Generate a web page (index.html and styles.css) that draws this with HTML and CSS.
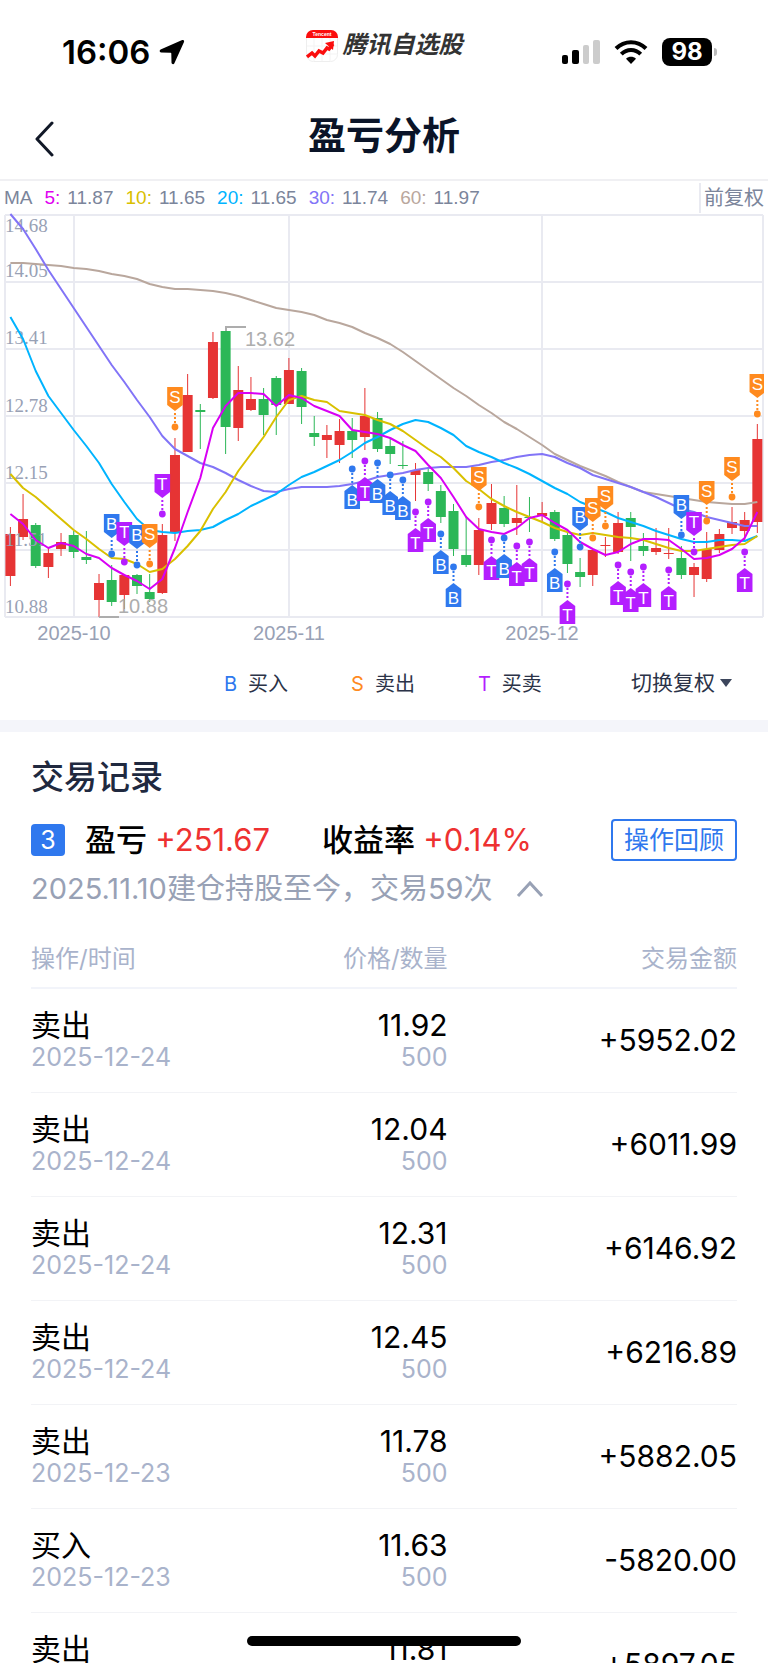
FILE: index.html
```html
<!DOCTYPE html>
<html lang="zh-CN">
<head>
    <meta charset="UTF-8">
    <meta name="viewport" content="width=device-width, initial-scale=1.0">
    <title>盈亏分析</title>
    <link rel="stylesheet" href="styles.css">
</head>
<body>
<div class="screen">
    <div class="status-bar">
        <div class="status-time">
            <span>16:06</span>
            <svg width="26" height="26" viewBox="0 0 26 26"><path d="M23.2 1.1 1.6 10.6C.2 11.2.4 13.4 2 13.5l9.6.3c.5 0 .7.2.7.7l.2 9.3c.1 1.6 2.3 2 2.9.5L25 3C25.6 1.600 24.500.600 23.200 1.100Z" fill="#000"/></svg>
        </div>
        <div class="app-brand">
            <svg width="32" height="32" viewBox="0 0 32 32">
                <rect x=".5" y=".5" width="31" height="31" rx="7" fill="#fff" stroke="#eee"/>
                <path d="M8 8v23M16 8v23M24 8v23M1 16h30M1 24h30" stroke="#f3f3f3"/>
                <path d="M0 8V7a7 7 0 0 1 7-7h18a7 7 0 0 1 7 7v1Z" fill="#fb0d0d"/>
                <text x="16" y="6" class="brand-tag">Tencent</text>
                <path d="M1 27l5-4 3 3 4-5 4 2 4-5 2 1 4-5" fill="none" stroke="#fb0d0d" stroke-width="3.500"/>
                <path d="M19 13l9-2-1 9Z" fill="#fb0d0d"/>
            </svg>
            <span>腾讯自选股</span>
        </div>
        <div class="status-icons">
            <svg width="38" height="26" viewBox="0 0 38 26">
                <rect x="0" y="16" width="6" height="9" rx="2"/>
                <rect x="10" y="11" width="7" height="14" rx="2"/>
                <rect x="21" y="6" width="6" height="19" rx="2" fill="#ccc"/>
                <rect x="31" y="1" width="7" height="24" rx="2" fill="#ccc"/>
            </svg>
            <svg width="34" height="26" viewBox="0 0 34 26" fill="none" stroke="#000" stroke-width="4">
                <path d="M2 9.500C10.500 1 23.500 1 32 9.500"/>
                <path d="M7.300 15.200c5.500-5.500 13.900-5.500 19.400 0"/>
                <path d="M17 25l-5-5.200c2.900-2.600 7.100-2.600 10 0Z" fill="#000" stroke="none"/>
            </svg>
            <span class="battery">98</span>
        </div>
    </div>

    <header class="nav-bar">
        <button class="back-btn" aria-label="返回">
            <svg width="20" height="36" viewBox="0 0 20 36"><path d="M17 2 2 18l15 16" fill="none" stroke="#111827" stroke-width="3" stroke-linecap="round" stroke-linejoin="round"/></svg>
        </button>
        <h1>盈亏分析</h1>
    </header>

    <div class="ma-bar">
        <span class="ma-title">MA</span>
        <span class="ma-item"><b class="ma5">5:</b>11.87</span>
        <span class="ma-item"><b class="ma10">10:</b>11.65</span>
        <span class="ma-item"><b class="ma20">20:</b>11.65</span>
        <span class="ma-item"><b class="ma30">30:</b>11.74</span>
        <span class="ma-item"><b class="ma60">60:</b>11.97</span>
        <span class="ma-mode">前复权</span>
    </div>

    <svg id="k-chart" class="k-chart" viewBox="0 8 768 440"></svg>

    <div class="legend">
        <span><b class="buy">B</b>买入</span>
        <span><b class="sell">S</b>卖出</span>
        <span><b class="both">T</b>买卖</span>
        <button class="switch-btn">切换复权<i class="caret"></i></button>
    </div>

    <section class="records">
        <h2>交易记录</h2>
        <div class="summary">
            <span class="round">3</span>
            <span class="metric">盈亏 <em>+251.67</em></span>
            <span class="metric">收益率 <em>+0.14%</em></span>
            <button class="review-btn">操作回顾</button>
        </div>
        <button class="period">
            2025.11.10建仓持股至今，交易59次
            <svg width="28" height="18" viewBox="0 0 28 18"><path d="M2 16 14 3l12 13" fill="none" stroke="#98a1b5" stroke-width="3"/></svg>
        </button>

        <table class="trades">
            <thead>
            <tr><th>操作/时间</th><th>价格/数量</th><th>交易金额</th></tr>
            </thead>
            <tbody>
            <tr><td>卖出<small>2025-12-24</small></td><td>11.92<small>500</small></td><td>+5952.02</td></tr>
            <tr><td>卖出<small>2025-12-24</small></td><td>12.04<small>500</small></td><td>+6011.99</td></tr>
            <tr><td>卖出<small>2025-12-24</small></td><td>12.31<small>500</small></td><td>+6146.92</td></tr>
            <tr><td>卖出<small>2025-12-24</small></td><td>12.45<small>500</small></td><td>+6216.89</td></tr>
            <tr><td>卖出<small>2025-12-23</small></td><td>11.78<small>500</small></td><td>+5882.05</td></tr>
            <tr><td>买入<small>2025-12-23</small></td><td>11.63<small>500</small></td><td>-5820.00</td></tr>
            <tr><td>卖出<small>2025-12-23</small></td><td>11.81<small>500</small></td><td>+5897.05</td></tr>
            </tbody>
        </table>
    </section>
    <div class="home-indicator"></div>
</div>
<script src="chart.js"></script>
</body>
</html>
```

FILE: styles.css
```css
* {
    box-sizing: border-box;
}

body {
    margin: 0;
    background: #fff;
    color: #000;
    font-family: Inter, "Noto Sans CJK SC", sans-serif;
}

button {
    background: none;
    border: none;
    padding: 0;
    font-family: inherit;
    cursor: pointer;
}

h1, h2 {
    margin: 0;
}

b, em, i {
    font-style: normal;
    font-weight: normal;
}

.screen {
    height: 100vh;
    overflow: hidden;
}

/* status bar */
.status-bar {
    display: grid;
    grid-template-columns: 1fr auto 1fr;
    align-items: start;
    padding: 30px 52px 0;
}

.status-time {
    display: flex;
    align-items: center;
    gap: 9px;
    height: 44px;
    padding-left: 10px;
    font-size: 33px;
    font-weight: 600;
}

.app-brand {
    display: flex;
    gap: 5px;
    height: 32px;
    font-size: 24px;
    font-weight: bold;
    font-style: italic;
    line-height: 30px;
    color: #333;
}

.brand-tag {
    font: bold 5px "Liberation Sans", sans-serif;
    fill: #fff;
    text-anchor: middle;
}

.status-icons {
    display: flex;
    justify-content: flex-end;
    align-items: center;
    gap: 14px;
    height: 44px;
}

.battery {
    position: relative;
    width: 50px;
    margin-right: 4px;
    border-radius: 8px;
    background: #000;
    color: #fff;
    font-size: 24px;
    font-weight: bold;
    line-height: 28px;
    text-align: center;
}

.battery::after {
    content: "";
    position: absolute;
    right: -5px;
    top: 10px;
    width: 3px;
    height: 8px;
    border-radius: 0 3px 3px 0;
    background: #bbb;
}

/* title */
.nav-bar {
    display: grid;
    grid-template-columns: 1fr auto 1fr;
    align-items: center;
    height: 107px;
    padding: 16px 35px 0;
    border-bottom: 2px solid #f0f0f3;
}

.back-btn {
    justify-self: start;
    height: 36px;
    margin-top: 8px;
}

.nav-bar h1 {
    font-size: 38px;
    font-weight: bold;
    line-height: 44px;
    color: #0a1428;
}

/* moving averages */
.ma-bar {
    display: flex;
    align-items: center;
    gap: 12px;
    height: 32px;
    padding: 2px 4px 0;
    font-family: "Liberation Sans", "Noto Sans CJK SC", sans-serif;
    font-size: 19px;
    color: #7b859b;
}

.ma-item b {
    margin-right: 7px;
}

.ma5 { color: #e000f0; }
.ma10 { color: #d9c000; }
.ma20 { color: #00b4ff; }
.ma30 { color: #8274f7; }
.ma60 { color: #b9a79d; }

.ma-mode {
    margin-left: auto;
    padding-left: 3px;
    border-left: 2px solid #e9eaf1;
    font-size: 20px;
    line-height: 30px;
}

/* chart */
.k-chart {
    display: block;
    width: 100%;
}

.grid {
    fill: none;
    stroke: #e9eaf1;
    stroke-width: 2;
}

.up { fill: #e63434; stroke: #e63434; }
.down { fill: #2cb757; stroke: #2cb757; }

.line {
    fill: none;
    stroke-width: 2;
    stroke-linejoin: round;
}

.price-label {
    font: 19px "Liberation Serif", serif;
    fill: #98a1b5;
}

.date-label {
    font: 20px "Liberation Sans", sans-serif;
    fill: #98a1b5;
    text-anchor: middle;
}

.peak-label {
    font: 20px "Liberation Sans", sans-serif;
    fill: #adadad;
}

.mark-text {
    font: 17px "Liberation Sans", sans-serif;
    fill: #fff;
    text-anchor: middle;
}

.legend {
    display: flex;
    align-items: center;
    gap: 63px;
    height: 67px;
    padding: 0 36px 8px 224px;
    font-size: 20px;
    color: #2b3348;
}

.legend b {
    margin-right: 11px;
}

.legend .buy { color: #2f78ee; }
.legend .sell { color: #ff8a1e; }
.legend .both { color: #b41eff; }

.switch-btn {
    display: flex;
    align-items: center;
    gap: 5px;
    margin-left: auto;
    font-size: 21px;
    line-height: 30px;
    color: #2b3348;
}

.caret {
    border: 6px solid transparent;
    border-top: 8px solid #3c465c;
    border-bottom: 0;
}

/* trade records */
.records {
    padding: 22px 31px 0;
    border-top: 12px solid #f4f5fa;
}

.records h2 {
    font-size: 33px;
    font-weight: 500;
    line-height: 46px;
    color: #20293f;
}

.summary {
    display: flex;
    align-items: center;
    margin-top: 19px;
    height: 42px;
    font-size: 31px;
    line-height: 38px;
}

.round {
    width: 34px;
    margin-right: 20px;
    border-radius: 4px;
    background: #2f78ee;
    color: #fff;
    font-size: 25px;
    line-height: 32px;
    text-align: center;
}

.metric {
    margin-right: 52px;
    font-weight: 500;
    white-space: nowrap;
}

.metric em {
    font-weight: 400;
    color: #ee3131;
}

.review-btn {
    margin-left: auto;
    padding: 0 11px;
    border: 2px solid #2f78ee;
    border-radius: 4px;
    color: #2f78ee;
    font-size: 25px;
    line-height: 38px;
    white-space: nowrap;
}

.period {
    display: flex;
    align-items: center;
    gap: 23px;
    margin-top: 7px;
    font-size: 29px;
    line-height: 42px;
    color: #98a1b5;
}

.trades {
    width: 100%;
    margin-top: 24px;
    border-collapse: collapse;
    table-layout: fixed;
}

.trades th {
    height: 54px;
    padding: 0 0 4px;
    border-bottom: 2px solid #f2f4fa;
    vertical-align: middle;
    text-align: right;
    font-size: 24px;
    line-height: 34px;
    font-weight: 400;
    color: #a9b3cb;
}

.trades th:nth-child(2) {
    width: 30%;
}

.trades th:last-child {
    width: 41%;
}

.trades td {
    height: 104px;
    padding: 0;
    border-bottom: 1px solid #f2f3f6;
    text-align: right;
    font-size: 30px;
    line-height: 34px;
}

.trades th:first-child,
.trades td:first-child {
    text-align: left;
}

.trades small {
    display: block;
    font-size: 25px;
    line-height: 30px;
    color: #a9b3cb;
}

.home-indicator {
    position: fixed;
    left: 50%;
    bottom: 17px;
    width: 274px;
    height: 10px;
    margin-left: -137px;
    border-radius: 5px;
    background: #000;
}
```

FILE: chart.js
```js
const chart = document.getElementById('k-chart');
const STEP = 12.66;
const xOf = i => 10.4 + STEP * i;

// direction, high, body top, body bottom, low
const candles = [
    ['up', 322, 329, 371, 381], ['up', 289, 314, 332, 335], ['down', 318, 320, 361, 363], ['up', 343, 348, 362, 373],
    ['up', 328, 337, 344, 351], ['down', 326, 330, 347, 353], ['down', 326, 352, 355, 359], ['up', 369, 378, 395, 412],
    ['down', 360, 375, 397, 401], ['up', 369, 370, 390, 404], ['down', 369, 370, 381, 389], ['down', 369, 387, 394, 397],
    ['up', 319, 330, 388, 389], ['up', 233, 250, 328, 336], ['up', 169, 190, 247, 247], ['down', 199, 205, 207, 244],
    ['up', 127, 137, 193, 194], ['down', 122, 126, 222, 249], ['up', 161, 185, 223, 236], ['up', 172, 194, 205, 206],
    ['down', 183, 194, 210, 230], ['down', 171, 173, 200, 230], ['up', 153, 165, 199, 199], ['down', 163, 166, 202, 219],
    ['down', 211, 228, 232, 241], ['up', 220, 230, 235, 253], ['up', 214, 226, 240, 258], ['down', 213, 226, 235, 253],
    ['up', 183, 211, 232, 245], ['down', 207, 213, 244, 247], ['down', 233, 241, 249, 259], ['down', 236, 260, 261, 264],
    ['up', 258, 265, 270, 296], ['down', 262, 267, 279, 286], ['down', 280, 286, 312, 318], ['down', 299, 306, 344, 351],
    ['down', 312, 350, 360, 362], ['up', 313, 325, 360, 370], ['up', 279, 298, 319, 325], ['down', 291, 303, 319, 322],
    ['up', 280, 313, 318, 330], ['down', 292, 312, 313, 327], ['up', 297, 308, 311, 317], ['down', 305, 307, 334, 336],
    ['down', 328, 330, 359, 368], ['down', 353, 367, 372, 382], ['up', 344, 345, 370, 381], ['up', 332, 340, 341, 352],
    ['up', 307, 318, 347, 349], ['down', 307, 313, 322, 356], ['down', 328, 341, 346, 351], ['up', 323, 343, 347, 350],
    ['up', 323, 348, 349, 354], ['down', 341, 353, 370, 374], ['up', 358, 362, 370, 392], ['up', 327, 344, 374, 377],
    ['up', 324, 329, 345, 348], ['up', 302, 317, 323, 329], ['up', 307, 315, 326, 335], ['up', 219, 234, 317, 328]
];

const averages = [
    { color: '#b9a79d', points: [58, 58, 59, 60, 61, 63, 64, 66, 69, 71, 74, 79, 82, 84, 84, 85, 86, 88, 91, 95, 99, 103, 105, 107, 110, 115, 118, 122, 128, 133, 139, 147, 156, 165, 174, 183, 191, 200, 208, 217, 224, 232, 240, 249, 255, 261, 266, 271, 277, 282, 287, 289, 291, 293, 295, 297, 298, 299, 299, 297] },
    { color: '#8274f7', points: [9, 24, 44, 65, 84, 103, 122, 141, 160, 177, 195, 212, 231, 244, 251, 258, 262, 268, 275, 281, 286, 287, 284, 282, 282, 282, 281, 279, 276, 272, 270, 268, 265, 263, 262, 262, 262, 260, 257, 255, 252, 250, 249, 252, 258, 263, 270, 274, 278, 282, 287, 292, 298, 304, 307, 312, 315, 318, 321, 321] },
    { color: '#00b4ff', points: [112, 134, 166, 191, 208, 225, 241, 258, 279, 297, 314, 325, 327, 328, 326, 325, 322, 315, 309, 301, 295, 289, 280, 272, 267, 261, 255, 247, 238, 232, 225, 219, 215, 217, 223, 230, 241, 247, 252, 258, 263, 269, 276, 283, 289, 297, 302, 307, 313, 317, 321, 326, 330, 334, 337, 337, 335, 335, 336, 331] },
    { color: '#d9c000', points: [269, 283, 292, 303, 314, 325, 334, 344, 353, 354, 359, 367, 364, 354, 341, 326, 304, 287, 266, 249, 232, 212, 195, 191, 195, 197, 206, 208, 210, 215, 219, 226, 235, 244, 252, 263, 276, 284, 294, 301, 307, 312, 317, 323, 327, 330, 328, 330, 332, 333, 335, 339, 343, 346, 346, 344, 342, 340, 339, 331] },
    { color: '#d800f4', points: [309, 319, 335, 343, 338, 341, 349, 353, 363, 370, 376, 384, 374, 343, 307, 273, 223, 201, 188, 188, 189, 201, 190, 193, 201, 206, 211, 225, 227, 229, 233, 240, 246, 260, 273, 292, 312, 324, 327, 329, 323, 313, 310, 318, 325, 337, 344, 350, 347, 339, 334, 334, 335, 344, 354, 353, 350, 344, 333, 307] }
];

// type, candle index, dot y, flag above (-1) or below (1) the dot
const marks = [
    ['B', 8, 349, -1], ['T', 9, 357, -1], ['B', 10, 360, -1], ['S', 11, 359, -1], ['T', 12, 309, -1], ['S', 13, 222, -1],
    ['B', 27, 264, 1], ['T', 28, 256, 1], ['B', 29, 258, 1], ['B', 30, 270, 1], ['B', 31, 275, 1], ['T', 32, 307, 1],
    ['T', 33, 297, 1], ['B', 34, 329, 1], ['B', 35, 362, 1], ['S', 37, 302, -1], ['T', 38, 335, 1], ['B', 39, 333, 1],
    ['T', 40, 341, 1], ['T', 41, 337, 1], ['B', 43, 347, 1], ['T', 44, 379, 1], ['B', 45, 342, -1], ['S', 46, 333, -1],
    ['S', 47, 321, -1], ['T', 48, 360, 1], ['T', 49, 367, 1], ['T', 50, 362, 1], ['T', 52, 365, 1], ['B', 53, 330, -1],
    ['T', 54, 347, -1], ['S', 55, 316, -1], ['S', 57, 292, -1], ['T', 58, 347, 1], ['S', 59, 209, -1]
];
const markColors = { B: '#2f78ee', S: '#ff8a1e', T: '#b41eff' };

const prices = [['14.68', 27], ['14.05', 72], ['13.41', 139], ['12.78', 207], ['12.15', 274], ['11.51', 341], ['10.88', 408]];
const gridRows = [10, 77, 144, 211, 278, 345, 412];
const months = [['2025-10', 74], ['2025-11', 289], ['2025-12', 542]];

let svg = '';

gridRows.forEach(y => svg += `<path class="grid" d="M5 ${y}H763"/>`);
months.forEach(([name, x]) => {
    svg += `<path class="grid" d="M${x} 10V412"/>`;
    svg += `<text class="date-label" x="${x}" y="435">${name}</text>`;
});
svg += '<path class="grid" d="M5 10V412M763 10V412"/>';

candles.forEach(([dir, high, top, bottom, low], i) => {
    const x = xOf(i);
    svg += `<g class="${dir}"><path d="M${x} ${high}V${low}"/>`;
    svg += `<rect x="${x - 5}" y="${top}" width="10" height="${bottom - top}" stroke="none"/></g>`;
});

prices.forEach(([price, y]) => svg += `<text class="price-label" x="5" y="${y}">${price}</text>`);

averages.forEach(({ color, points }) => {
    const path = points.map((y, i) => `${xOf(i)},${y}`).join(' ');
    svg += `<polyline class="line" points="${path}" stroke="${color}"/>`;
});

// highest and lowest price
svg += '<path d="M226 126V122H246M99 412H119" fill="none" stroke="#adadad" stroke-width="2"/>';
svg += '<text class="peak-label" x="245" y="141">13.62</text>';
svg += '<text class="peak-label" x="118" y="408">10.88</text>';

svg += '<clipPath id="plot"><rect width="764" height="448"/></clipPath><g clip-path="url(#plot)">';
marks.forEach(([type, i, y, side]) => {
    const x = xOf(i);
    const color = markColors[type];
    const tip = y + side * 16;
    const shoulder = y + side * 22;
    const end = y + side * 40;
    svg += `<circle cx="${x}" cy="${y}" r="3.4" fill="${color}"/>`;
    svg += `<path d="M${x} ${y}V${tip}" stroke="${color}" stroke-width="2" stroke-dasharray="2 2"/>`;
    svg += `<path d="M${x} ${tip}L${x + 7.8} ${shoulder}V${end}H${x - 7.8}V${shoulder}Z" fill="${color}"/>`;
    svg += `<text class="mark-text" x="${x}" y="${y + side * 30 + (side > 0 ? 7 : 6)}">${type}</text>`;
});
svg += '</g>';

chart.innerHTML = svg;
```
